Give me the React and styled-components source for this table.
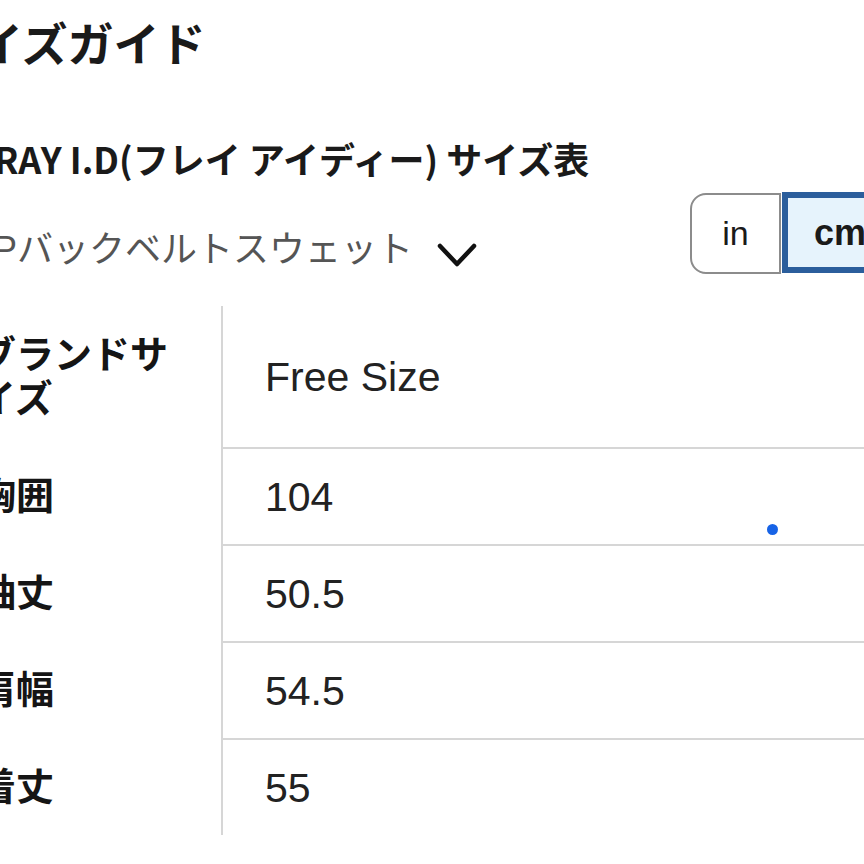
import React from "react";
import styled, { createGlobalStyle } from "styled-components";

const Global = createGlobalStyle`
  html, body { margin: 0; padding: 0; background: #fff; }
  body {
    font-family: "Liberation Sans", "Noto Sans CJK JP", sans-serif;
    color: #1a1a1a;
  }
`;

const Page = styled.div`
  width: 864px;
  height: 864px;
  overflow: hidden;
  background: #fff;
`;

const Inner = styled.div`
  margin-left: -22px;
  width: 920px;
  padding-top: 19px;
`;

const Heading = styled.h1`
  margin: 0 0 0 -47px;
  font-size: 46px;
  line-height: 52px;
  font-weight: 700;
  color: #1a1a1a;
`;

const SubHeading = styled.h2`
  margin: 65px 0 0 -5px;
  font-family: "Noto Sans CJK JP", "Liberation Sans", sans-serif;
  font-size: 36px;
  line-height: 44px;
  font-weight: 700;
  color: #1a1a1a;
  white-space: nowrap;
`;

const ToolRow = styled.div`
  margin-top: 13px;
  display: flex;
  align-items: flex-end;
  justify-content: space-between;
`;

const Dropdown = styled.div`
  display: flex;
  align-items: center;
  margin: 0 0 3px -17px;
  font-size: 36px;
  line-height: 43px;
  color: #555;
  white-space: nowrap;
`;

const Chevron = styled.svg`
  margin-left: 24px;
  margin-top: 12px;
  flex: none;
`;

const Toggle = styled.div`
  display: flex;
  align-items: stretch;
  gap: 1px;
`;

const Segment = styled.button`
  box-sizing: border-box;
  height: 81px;
  width: ${(p) => (p.$active ? "116px" : "91px")};
  border: ${(p) => (p.$active ? "6px solid #2b5e9c" : "2px solid #8c8c8c")};
  border-radius: ${(p) => (p.$active ? "0" : "16px 0 0 16px")};
  background: ${(p) => (p.$active ? "#e6f3fc" : "#fff")};
  font-family: "Liberation Sans", "Noto Sans CJK JP", sans-serif;
  font-size: ${(p) => (p.$active ? "36px" : "34px")};
  font-weight: ${(p) => (p.$active ? 700 : 400)};
  color: #1a1a1a;
  padding: 0;
  margin-top: ${(p) => (p.$active ? "-1px" : "0")};
  display: flex;
  align-items: center;
  justify-content: center;
`;

const Table = styled.div`
  margin-top: 32px;
  display: grid;
  grid-template-columns: 243px 1fr;
`;

const Label = styled.div`
  padding: 26.5px 20px 26.5px 0;
  font-size: 38px;
  line-height: 44px;
  font-weight: 700;
  color: #151515;
  display: flex;
  align-items: center;
`;

const Value = styled.div`
  position: relative;
  border-left: 2px solid #d6d6d6;
  border-top: ${(p) => (p.$first ? "none" : "2px solid #d6d6d6")};
  padding-left: 42px;
  font-size: 41px;
  line-height: 44px;
  color: #222;
  display: flex;
  align-items: center;
`;

const Dot = styled.span`
  position: absolute;
  left: 544px;
  top: 75px;
  width: 11px;
  height: 11px;
  border-radius: 50%;
  background: #1763e6;
`;

const rows = [
  { label: "ブランドサイズ", value: "Free Size" },
  { label: "胸囲", value: "104", dot: true },
  { label: "袖丈", value: "50.5" },
  { label: "肩幅", value: "54.5" },
  { label: "着丈", value: "55" },
];

export default function App() {
  return (
    <Page>
      <Global />
      <Inner>
        <Heading>サイズガイド</Heading>
        <SubHeading>FRAY I.D(フレイ アイディー) サイズ表</SubHeading>
        <ToolRow>
          <Dropdown>
            ZIPバックベルトスウェット
            <Chevron width="40" height="26" viewBox="0 0 40 26">
              <polyline
                points="3,3 20,21 37,3"
                fill="none"
                stroke="#111"
                strokeWidth="4.5"
                strokeLinecap="round"
                strokeLinejoin="round"
              />
            </Chevron>
          </Dropdown>
          <Toggle>
            <Segment>in</Segment>
            <Segment $active>cm</Segment>
          </Toggle>
        </ToolRow>
        <Table>
          {rows.map((r, i) => (
            <React.Fragment key={r.label}>
              <Label>{r.label}</Label>
              <Value $first={i === 0}>
                {r.value}
                {r.dot && <Dot />}
              </Value>
            </React.Fragment>
          ))}
        </Table>
      </Inner>
    </Page>
  );
}
